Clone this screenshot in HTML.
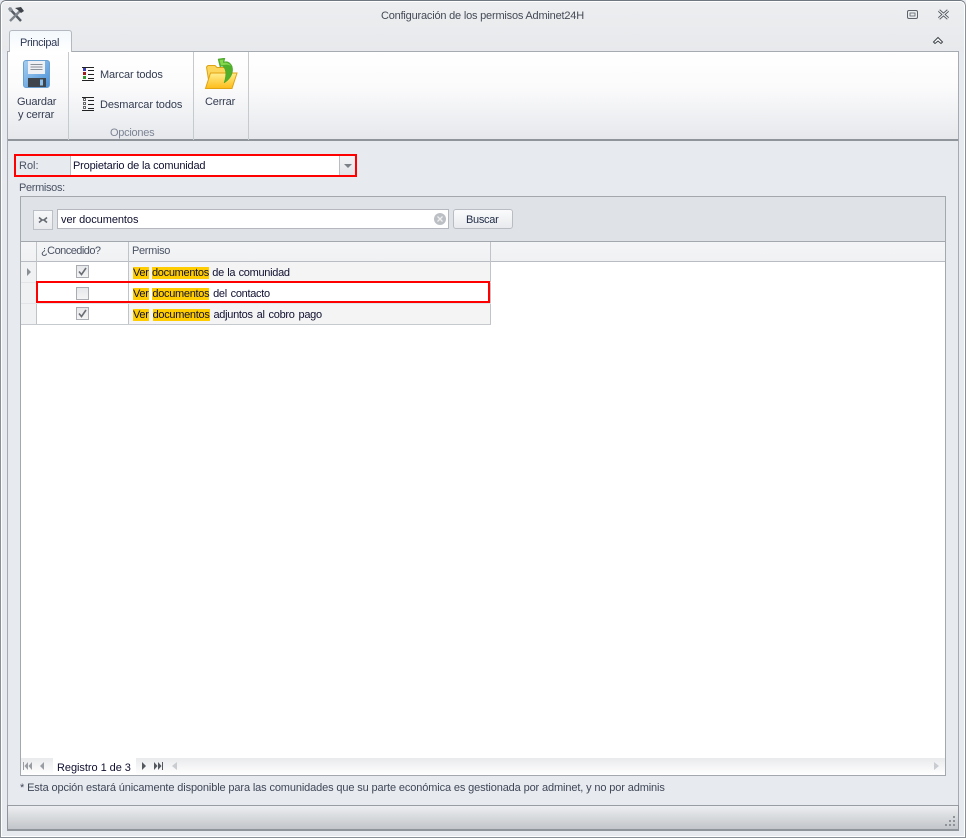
<!DOCTYPE html>
<html><head><meta charset="utf-8">
<style>
*{box-sizing:border-box}
html,body{margin:0;padding:0;background:#e7eaef}
body{width:966px;height:838px;position:relative;overflow:hidden;font-family:"Liberation Sans",sans-serif;font-size:11px;color:#1e1e3c}
.a{position:absolute}
.t{position:absolute;white-space:nowrap;line-height:14px;height:14px}
mark{background:#fc0;color:inherit;padding:0}
.cb{position:absolute;width:13px;height:13px;border:1px solid #a9adb3;background:linear-gradient(#e6e7e9,#f4f4f5)}
</style></head><body>
<div class="a" style="left:0;top:0;width:966px;height:838px;border:1px solid #8a9097;border-top-color:#6f7780;border-radius:6px 6px 0 0;background:linear-gradient(#eceef0 0,#e7e9ec 50px,#e7eaef 51px)"></div>
<div class="a" style="left:1px;top:1px;width:964px;height:836px;border:1px solid #fff;border-radius:5px 5px 0 0"></div>

<svg class="a" style="left:7px;top:6px" width="18" height="18" viewBox="0 0 18 18"><path d="M2 2 L14 15" stroke="#555c64" stroke-width="2.4"/><path d="M15 3 L3 15" stroke="#7d848b" stroke-width="2.4"/><path d="M8 2 L14 1 L17 5 L14 7 L11 4Z" fill="#3e4349"/><path d="M1 3 L4 1 L6 4 L3 6Z" fill="#8b9299"/></svg>
<div class="t" style="left:381px;top:9px;letter-spacing:-.2px;color:#454a55">Configuración de los permisos Adminet24H</div>

<svg class="a" style="left:907px;top:9px" width="12" height="11" viewBox="0 0 12 11"><rect x=".5" y="1.5" width="10" height="8" rx="1.5" fill="none" stroke="#5d626a"/><rect x="3" y="4" width="5" height="3" fill="none" stroke="#5d626a" stroke-width=".8"/></svg>
<svg class="a" style="left:937px;top:9px" width="13" height="11" viewBox="0 0 13 11"><path d="M2 1.5 L11 9.5 M11 1.5 L2 9.5" stroke="#4d525a" stroke-width="3"/><path d="M2 1.5 L11 9.5 M11 1.5 L2 9.5" stroke="#e7e9ec" stroke-width="1.2"/></svg>
<svg class="a" style="left:932px;top:36px" width="12" height="9" viewBox="0 0 12 9"><path d="M1.5 6 L6 1.5 L10.5 6 L9 7.5 L6 5 L3 7.5Z" fill="#fff" stroke="#3d4248"/></svg>

<!-- ribbon -->
<div class="a" style="left:7px;top:51px;width:952px;height:90px;border:1px solid #a6abb2;border-bottom:2px solid #8f949b;background:linear-gradient(#fff 0,#fbfbfc 35px,#e6e8ec 100%)"></div>
<div class="a" style="left:9px;top:30px;width:63px;height:22px;border:1px solid #b4b9c0;border-bottom:0;border-radius:3px 3px 0 0;background:linear-gradient(#f3f8fc,#fff)"></div>
<div class="t" style="left:20px;top:36px;color:#2e3a55;letter-spacing:-.35px">Principal</div>
<div class="a" style="left:68px;top:52px;width:1px;height:88px;background:#c6cacf"></div>
<div class="a" style="left:193px;top:52px;width:1px;height:88px;background:#c6cacf"></div>
<div class="a" style="left:248px;top:52px;width:1px;height:88px;background:#c6cacf"></div>

<!-- save icon -->
<svg class="a" style="left:23px;top:60px" width="28" height="29" viewBox="0 0 28 29">
<defs><linearGradient id="b" x1="0" y1="0" x2="1" y2="1"><stop offset="0" stop-color="#a6cff0"/><stop offset="1" stop-color="#4a90d8"/></linearGradient></defs>
<rect x=".5" y=".5" width="26" height="27" rx="2.5" fill="url(#b)" stroke="#6a9fd2"/>
<rect x="5" y="1" width="17" height="13" fill="#eef0f3"/>
<path d="M7.5 4.5H19.5M7.5 7H19.5M7.5 9.5H19.5" stroke="#8b9198"/>
<rect x="5" y="18" width="18" height="9" fill="#3f454c"/>
<rect x="17" y="19.5" width="3" height="6" fill="#8fc0ea"/>
</svg>
<div class="t" style="left:17px;top:95px;letter-spacing:-.15px;color:#333c50">Guardar</div>
<div class="t" style="left:18px;top:108px;letter-spacing:-.15px;color:#333c50">y cerrar</div>

<!-- list icons -->
<svg class="a" style="left:82px;top:67px" width="13" height="15" viewBox="0 0 13 15"><rect x="1" y="1" width="3" height="3" fill="#3c3fb0"/><rect x="1" y="5" width="3" height="3" fill="#a11c1c"/><rect x="1" y="9" width="3" height="3" fill="#2f9a2f"/><path d="M0 .5H12M6 3.5H12M6 7.5H12M6 11.5H12M0 13.5H12" stroke="#222"/></svg>
<svg class="a" style="left:82px;top:97px" width="13" height="15" viewBox="0 0 13 15"><rect x="1.5" y="1.5" width="2" height="2" fill="#fff" stroke="#666"/><rect x="1.5" y="5.5" width="2" height="2" fill="#fff" stroke="#666"/><rect x="1.5" y="9.5" width="2" height="2" fill="#fff" stroke="#666"/><path d="M0 .5H12M6 3.5H12M6 7.5H12M6 11.5H12M0 13.5H12" stroke="#222"/></svg>
<div class="t" style="left:100px;top:68px;letter-spacing:-.12px;color:#333c50">Marcar todos</div>
<div class="t" style="left:100px;top:98px;letter-spacing:-.1px;color:#333c50">Desmarcar todos</div>
<div class="t" style="left:110px;top:126px;color:#7c8494;letter-spacing:-.27px">Opciones</div>

<!-- folder icon -->
<svg class="a" style="left:204px;top:58px" width="34" height="32" viewBox="0 0 34 32">
<defs><linearGradient id="f" x1="0" y1="0" x2="0" y2="1"><stop offset="0" stop-color="#ffee90"/><stop offset="1" stop-color="#fdbc18"/></linearGradient></defs>
<path d="M2.5 9 L4 7.5 H11 L13 9.5 H26 V25 H5 Z" fill="#fbd65a" stroke="#dca315"/>
<path d="M6.5 15 H33 L28 30.5 H1.5 Z" fill="url(#f)" stroke="#e0a312"/>
<path d="M14 1 L16 9 L18 8 C22 10 23 16 20 25 C27 21 30 14 28 8 C26 4 23 3 20 4 L21 0 Z" fill="#4fae2a" stroke="#3f9a20" stroke-width=".4"/>
<path d="M15.5 2 L19.5 1.5 L19 5 C22 4 25 5 27 8 C23 6 20 7 17 7.5Z" fill="#86d64e"/>
</svg>
<div class="t" style="left:205px;top:95px;letter-spacing:-.18px;color:#333c50">Cerrar</div>

<!-- Rol -->
<div class="a" style="left:14px;top:154px;width:343px;height:23px;border:2px solid #f00"></div>
<div class="t" style="left:19px;top:159px;color:#4a5263">Rol:</div>
<div class="a" style="left:70px;top:156px;width:285px;height:19px;background:#fff;border-left:1px solid #b9bdc3"></div>
<div class="t" style="left:73px;top:159px;color:#101030;letter-spacing:-.17px">Propietario de la comunidad</div>
<div class="a" style="left:339px;top:156px;width:16px;height:19px;background:linear-gradient(#f2f3f5,#e2e4e8);border-left:1px solid #b9bdc3"></div>
<div class="a" style="left:344px;top:164px;width:0;height:0;border:4px solid transparent;border-top:4px solid #7b8087;border-bottom:0"></div>
<div class="t" style="left:19px;top:181px;color:#4a5263;letter-spacing:-.34px">Permisos:</div>

<!-- grid -->
<div class="a" style="left:20px;top:196px;width:926px;height:580px;border:1px solid #a3a8af;background:#fff"></div>
<div class="a" style="left:21px;top:197px;width:924px;height:45px;background:#dfe2e6"></div>
<div class="a" style="left:33px;top:210px;width:20px;height:20px;background:linear-gradient(#f7f8f9,#e8eaed);border:1px solid #bcc0c6"></div>
<svg class="a" style="left:38px;top:215px" width="10" height="10" viewBox="0 0 10 10"><path d="M1 2.5 L4 5 L1 7.5 M9 2.5 L6 5 L9 7.5 M4 5H6" fill="none" stroke="#666b72" stroke-width="1.6"/></svg>
<div class="a" style="left:57px;top:209px;width:392px;height:20px;background:#fff;border:1px solid #b4b8be"></div>
<div class="t" style="left:61px;top:213px;color:#101030;letter-spacing:-.06px">ver documentos</div>
<svg class="a" style="left:434px;top:213px" width="12" height="12" viewBox="0 0 12 12"><circle cx="6" cy="6" r="6" fill="#bcc0c5"/><path d="M3.5 3.5 L8.5 8.5 M8.5 3.5 L3.5 8.5" stroke="#eee" stroke-width="1.3"/></svg>
<div class="a" style="left:453px;top:209px;width:60px;height:20px;border:1px solid #b9bdc3;border-radius:3px;background:linear-gradient(#fbfbfc,#e8eaed)"></div>
<div class="t" style="left:466px;top:213px;color:#1e2a45;letter-spacing:-.3px">Buscar</div>

<div class="a" style="left:21px;top:241px;width:924px;height:21px;background:linear-gradient(#f4f5f7,#f0f1f3);border-top:1px solid #a3a8af;border-bottom:1px solid #b9bdc3"></div>
<div class="a" style="left:36px;top:242px;width:1px;height:83px;background:#c0c4c9"></div>
<div class="a" style="left:128px;top:242px;width:1px;height:83px;background:#c0c4c9"></div>
<div class="a" style="left:490px;top:242px;width:1px;height:83px;background:#c0c4c9"></div>
<div class="t" style="left:41px;top:244px;color:#4a5263;letter-spacing:-.54px">¿Concedido?</div>
<div class="t" style="left:132px;top:244px;color:#4a5263;letter-spacing:-.33px">Permiso</div>

<!-- rows -->
<div class="a" style="left:21px;top:262px;width:15px;height:63px;background:#f0f1f3"></div>
<div class="a" style="left:129px;top:262px;width:361px;height:21px;background:#f4f4f4"></div>
<div class="a" style="left:129px;top:304px;width:361px;height:21px;background:#f4f4f4"></div>
<div class="a" style="left:21px;top:282px;width:470px;height:1px;background:#e2e4e7"></div>
<div class="a" style="left:21px;top:303px;width:470px;height:1px;background:#e2e4e7"></div>
<div class="a" style="left:21px;top:324px;width:470px;height:1px;background:#c6c9cd"></div>
<div class="a" style="left:27px;top:268px;width:0;height:0;border:4px solid transparent;border-left:4px solid #8a8f96;border-right:0"></div>

<div class="cb" style="left:76px;top:265px"></div>
<svg class="a" style="left:78px;top:267px" width="9" height="9" viewBox="0 0 9 9"><path d="M1 4.5 L3.5 7.5 L8 1" fill="none" stroke="#6a6e74" stroke-width="1.6"/></svg>
<div class="cb" style="left:76px;top:287px"></div>
<div class="cb" style="left:76px;top:307px"></div>
<svg class="a" style="left:78px;top:309px" width="9" height="9" viewBox="0 0 9 9"><path d="M1 4.5 L3.5 7.5 L8 1" fill="none" stroke="#6a6e74" stroke-width="1.6"/></svg>

<div class="t" style="left:133px;top:266px;color:#101030;letter-spacing:-.3px;word-spacing:.6px"><mark>Ver</mark> <mark>documentos</mark> de la comunidad</div>
<div class="t" style="left:133px;top:287px;color:#101030;letter-spacing:-.3px;word-spacing:1px"><mark>Ver</mark> <mark>documentos</mark> del contacto</div>
<div class="t" style="left:133px;top:308px;color:#101030;letter-spacing:-.3px;word-spacing:1.2px"><mark>Ver</mark> <mark>documentos</mark> adjuntos al cobro pago</div>

<div class="a" style="left:36px;top:281px;width:454px;height:22px;border:2px solid #f00"></div>

<!-- navigator -->
<div class="a" style="left:21px;top:758px;width:924px;height:17px;background:linear-gradient(#e9eaec,#fff)"></div>
<div class="a" style="left:53px;top:758px;width:83px;height:17px;background:#fff"></div>
<div class="t" style="left:57px;top:761px;color:#101030;letter-spacing:-.05px">Registro 1 de 3</div>
<svg class="a" style="left:23px;top:762px" width="30" height="9" viewBox="0 0 30 9"><path d="M0.5 0V8" stroke="#9a9ea4"/><path d="M5 0V8L1.5 4ZM9 0V8L5.5 4ZM21 0V8L17 4Z" fill="#9a9ea4"/></svg>
<svg class="a" style="left:141px;top:762px" width="26" height="9" viewBox="0 0 26 9"><path d="M1 0V8L5 4ZM13 0V8L16.5 4ZM17 0V8L20.5 4Z" fill="#55595f"/><path d="M21.5 0V8" stroke="#55595f"/></svg>
<div class="a" style="left:172px;top:762px;width:0;height:0;border:4.5px solid transparent;border-right:5px solid #c9ccd0;border-left:0"></div>
<div class="a" style="left:934px;top:762px;width:0;height:0;border:4.5px solid transparent;border-left:5px solid #c9ccd0;border-right:0"></div>

<div class="t" style="left:20px;top:781px;color:#3f4757;letter-spacing:-.13px">* Esta opción estará únicamente disponible para las comunidades que su parte económica es gestionada por adminet, y no por adminis</div>

<!-- side borders and status -->
<div class="a" style="left:7px;top:140px;width:1px;height:666px;background:#a6abb2"></div>
<div class="a" style="left:958px;top:140px;width:1px;height:666px;background:#a6abb2"></div>
<div class="a" style="left:7px;top:805px;width:952px;height:26px;border:1px solid #8f949b;border-top:1px solid #989da3;border-bottom:2px solid #8f949b;background:linear-gradient(#eceef1,#c2c5c9)"></div>
<svg class="a" style="left:944px;top:815px" width="12" height="12" viewBox="0 0 12 12" fill="#8f9399"><rect x="9" y="1" width="2" height="2"/><rect x="5" y="5" width="2" height="2"/><rect x="9" y="5" width="2" height="2"/><rect x="1" y="9" width="2" height="2"/><rect x="5" y="9" width="2" height="2"/><rect x="9" y="9" width="2" height="2"/></svg>
</body></html>
